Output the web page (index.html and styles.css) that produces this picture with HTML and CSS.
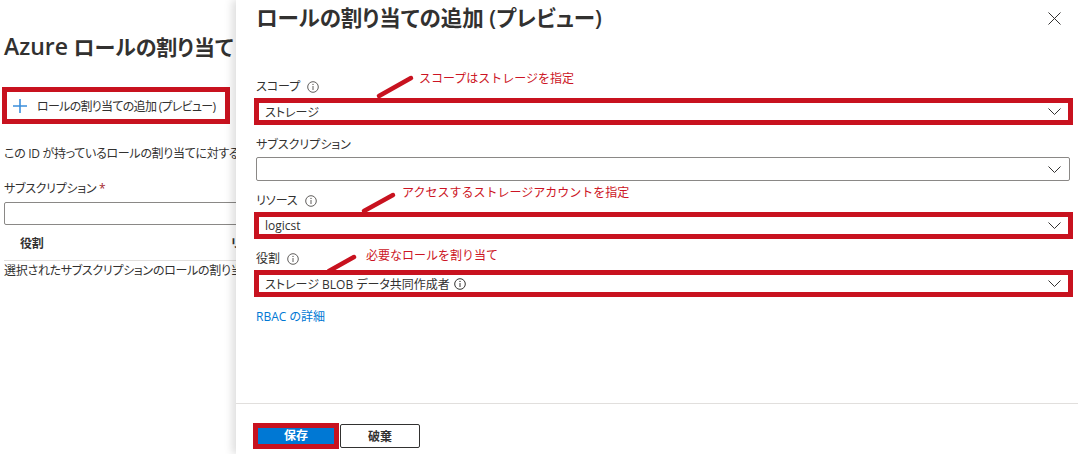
FILE: index.html
```
<!DOCTYPE html>
<html lang="ja">
<head>
  <meta charset="UTF-8">
  <title>ロールの割り当ての追加</title>
  <link rel="stylesheet" href="styles.css">
</head>
<body>

  <!-- background page, only the strip left of the blade shows -->
  <div class="page">
    <h1 class="page-title"><span class="latin">Azure</span> ロールの割り当て</h1>
    <div class="add-box">
      <button class="add-btn" type="button">
        <svg class="plus" width="16" height="16" viewBox="0 0 16 16"><path d="M8 1v14M1 8h14" stroke="#3b8fdc" stroke-width="1.6" fill="none"/></svg>
        ロールの割り当ての追加 (プレビュー)
      </button>
    </div>
    <p class="desc">この ID が持っているロールの割り当てに対する</p>
    <div class="sub-label">サブスクリプション <span class="req">*</span></div>
    <div class="sub-input"></div>
    <div class="table-head"><span class="col-role">役割</span><span class="col-res">リ</span></div>
    <p class="empty">選択されたサブスクリプションのロールの割り当て</p>
  </div>

  <aside class="panel">
    <header class="panel-head">
      <h2>ロールの割り当ての追加 (プレビュー)</h2>
      <button class="close" type="button">
        <svg width="13" height="13" viewBox="0 0 13 13"><path d="M0.5 0.5l12 12M12.5 0.5l-12 12" stroke="#323130" stroke-width="1" fill="none"/></svg>
      </button>
    </header>

    <form class="panel-body">
      <div class="field">
        <div class="label">スコープ
          <svg class="info" width="12" height="12" viewBox="0 0 12 12"><circle cx="6" cy="6" r="5.3" stroke="#605e5c" fill="none"/><path d="M6 5v4" stroke="#605e5c"/><circle cx="6" cy="3.4" r="0.7" fill="#605e5c"/></svg>
        </div>
        <div class="select hl">
          <span>ストレージ</span>
          <svg class="chev" width="13" height="7" viewBox="0 0 13 7"><path d="M0.5 0.5l6 6 6-6" stroke="#323130" fill="none"/></svg>
        </div>
      </div>

      <div class="field">
        <div class="label">サブスクリプション</div>
        <div class="select">
          <span></span>
          <svg class="chev" width="13" height="7" viewBox="0 0 13 7"><path d="M0.5 0.5l6 6 6-6" stroke="#323130" fill="none"/></svg>
        </div>
      </div>

      <div class="field">
        <div class="label">リソース
          <svg class="info" width="12" height="12" viewBox="0 0 12 12"><circle cx="6" cy="6" r="5.3" stroke="#605e5c" fill="none"/><path d="M6 5v4" stroke="#605e5c"/><circle cx="6" cy="3.4" r="0.7" fill="#605e5c"/></svg>
        </div>
        <div class="select hl">
          <span>logicst</span>
          <svg class="chev" width="13" height="7" viewBox="0 0 13 7"><path d="M0.5 0.5l6 6 6-6" stroke="#323130" fill="none"/></svg>
        </div>
      </div>

      <div class="field">
        <div class="label">役割
          <svg class="info" width="12" height="12" viewBox="0 0 12 12"><circle cx="6" cy="6" r="5.3" stroke="#605e5c" fill="none"/><path d="M6 5v4" stroke="#605e5c"/><circle cx="6" cy="3.4" r="0.7" fill="#605e5c"/></svg>
        </div>
        <div class="select hl">
          <span class="value">ストレージ BLOB データ共同作成者
            <svg class="info" width="12" height="12" viewBox="0 0 12 12"><circle cx="6" cy="6" r="5.3" stroke="#323130" fill="none"/><path d="M6 5v4" stroke="#323130"/><circle cx="6" cy="3.4" r="0.7" fill="#323130"/></svg>
          </span>
          <svg class="chev" width="13" height="7" viewBox="0 0 13 7"><path d="M0.5 0.5l6 6 6-6" stroke="#323130" fill="none"/></svg>
        </div>
      </div>

      <a class="link" href="#">RBAC の詳細</a>
    </form>

    <footer class="panel-foot">
      <span class="save-box"><button class="save" type="button">保存</button></span>
      <button class="discard" type="button">破棄</button>
    </footer>
  </aside>

  <!-- red annotations drawn over the screenshot -->
  <div class="notes">
    <svg class="note-lines" width="1078" height="454">
      <g stroke="#c8121f" stroke-width="4.5" stroke-linecap="round">
        <line x1="379" y1="96" x2="411" y2="78"/>
        <line x1="364" y1="211" x2="393" y2="195"/>
        <line x1="329" y1="271" x2="354" y2="257"/>
      </g>
    </svg>
    <span class="note note-scope">スコープはストレージを指定</span>
    <span class="note note-res">アクセスするストレージアカウントを指定</span>
    <span class="note note-role">必要なロールを割り当て</span>
  </div>

</body>
</html>
```

FILE: styles.css
```
* {
  box-sizing: border-box;
}

body {
  margin: 0;
  width: 1078px;
  height: 454px;
  overflow: hidden;
  position: relative;
  background: #fff;
  color: #323130;
  font-family: "Open Sans", "Noto Sans CJK JP", sans-serif;
  font-size: 12px;
  font-feature-settings: "palt";
}

button {
  font-family: inherit;
  font-feature-settings: inherit;
  cursor: pointer;
}

/* ---- background page (only the part left of the blade shows) ---- */
.page {
  width: 236px;
  overflow: hidden;
  padding-left: 4px;
  white-space: nowrap;
  letter-spacing: -0.3px;
}

.page-title {
  margin: 0;
  padding-top: 31px;
  font-size: 21px;
  line-height: 30px;
  font-weight: 600;
  letter-spacing: 0;
}

.latin {
  font-size: 23px;
  line-height: 30px;
}

.add-box {
  margin: 25px 0 0 -2px;
  width: 228px;
  height: 37px;
  border: 5px solid #c8121f;
  display: flex;
  align-items: center;
}

.add-btn {
  display: flex;
  align-items: center;
  border: 0;
  background: none;
  padding: 0 0 0 5px;
  font-size: 12px;
  letter-spacing: -0.7px;
  color: #323130;
  white-space: nowrap;
}

.plus {
  margin-right: 9px;
}

.desc {
  margin: 21px 0 0;
  line-height: 18px;
}

.sub-label {
  margin-top: 17px;
  line-height: 18px;
}

.req {
  color: #a4262c;
}

.sub-input {
  margin-top: 4px;
  width: 600px;
  height: 23px;
  border: 1px solid #8a8886;
  border-radius: 2px;
}

.table-head {
  margin-top: 10px;
  padding: 0 0 7px 16px;
  line-height: 18px;
  font-weight: 700;
  border-bottom: 1px solid #e1dfdd;
  display: flex;
  width: 600px;
}

.col-role {
  width: 211px;
}

.empty {
  margin: 1px 0 0;
  line-height: 18px;
}

/* ---- blade ---- */
.panel {
  position: absolute;
  top: 0;
  left: 236px;
  right: 0;
  bottom: 0;
  background: #fff;
  box-shadow: -4px 0 8px rgba(0, 0, 0, 0.13);
  display: flex;
  flex-direction: column;
}

.panel-head {
  display: flex;
  justify-content: space-between;
  align-items: flex-start;
  padding: 4px 17px 0 20px;
  height: 32px;
}

.panel-head h2 {
  margin: 0;
  font-size: 21.5px;
  line-height: 28px;
  font-weight: 600;
}

.close {
  border: 0;
  background: none;
  padding: 0;
  margin-top: 8px;
  line-height: 0;
}

.panel-body {
  flex: 1;
  padding: 47px 0 0 20px;
}

.field + .field {
  margin-top: 12px;
}

.label {
  height: 16px;
  line-height: 16px;
  display: flex;
  align-items: center;
  gap: 7px;
}

.select {
  margin-top: 4px;
  width: 814px;
  height: 24px;
  border: 1px solid #8a8886;
  border-radius: 2px;
  display: flex;
  align-items: center;
  justify-content: space-between;
  padding: 0 8px;
}

.select.hl {
  margin-top: 3px;
  margin-left: -2px;
  width: 819px;
  height: 27px;
  border: 5px solid #c8121f;
  border-radius: 0;
  padding: 0 7px 0 6px;
}

.value {
  display: flex;
  align-items: center;
  gap: 4px;
}

.link {
  display: block;
  margin-top: 12px;
  line-height: 16px;
  color: #0078d4;
  text-decoration: none;
}

.panel-foot {
  height: 51px;
  border-top: 1px solid #e1dfdd;
  padding: 19px 0 0 17px;
  display: flex;
  align-items: flex-start;
}

.save-box {
  display: inline-flex;
  border: 5px solid #c8121f;
}

.save {
  width: 76px;
  height: 16px;
  padding: 0;
  border: 0;
  background: #0078d4;
  color: #fff;
  font-size: 12px;
  line-height: 16px;
  font-weight: 700;
}

.discard {
  margin: 1px 0 0 1px;
  width: 80px;
  height: 24px;
  padding: 0;
  border: 1px solid #323130;
  border-radius: 2px;
  background: #fff;
  color: #323130;
  font-size: 12px;
  font-weight: 700;
}

/* ---- annotations ---- */
.notes {
  position: absolute;
  inset: 0;
  pointer-events: none;
}

.note-lines {
  position: absolute;
  top: 0;
  left: 0;
}

.note {
  position: absolute;
  font-family: "Noto Sans CJK JP", sans-serif;
  font-feature-settings: normal;
  font-size: 12px;
  line-height: 14px;
  color: #cc1424;
  white-space: nowrap;
}

.note-scope {
  left: 419px;
  top: 71px;
}

.note-res {
  left: 402px;
  top: 185px;
}

.note-role {
  left: 366px;
  top: 248px;
}
```
